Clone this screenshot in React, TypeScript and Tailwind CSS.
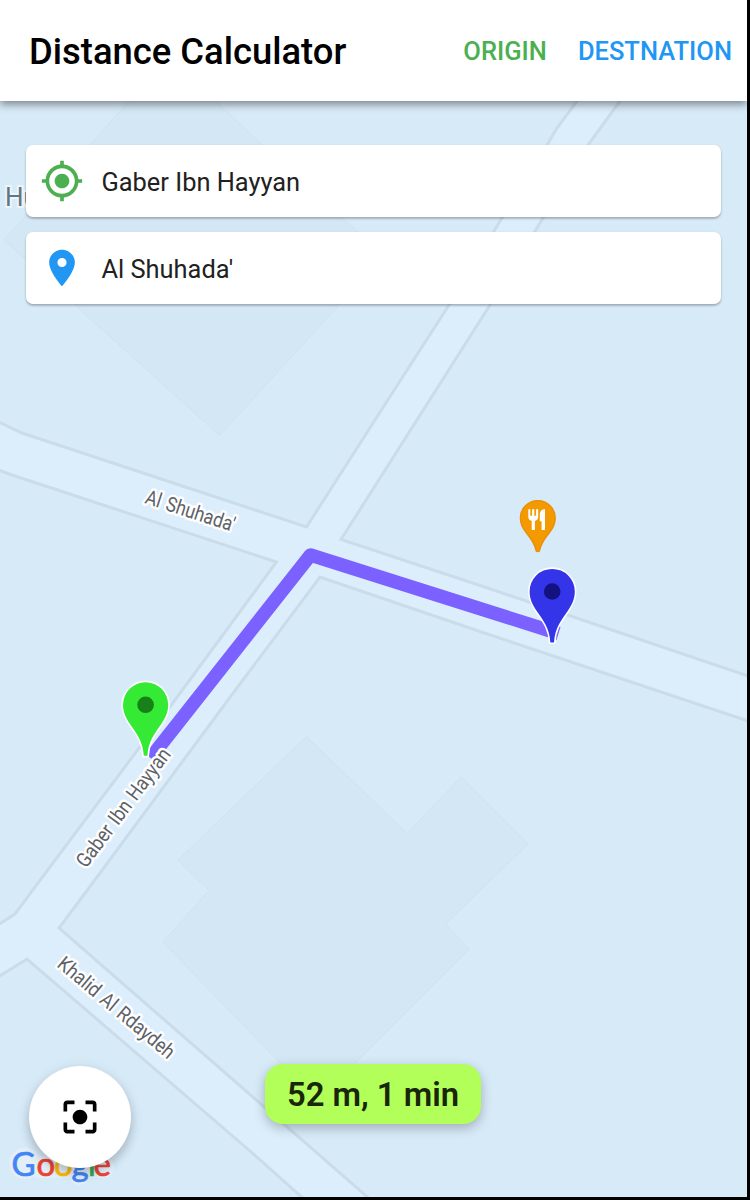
import React from "react";
import { MdCenterFocusStrong, MdLocationOn, MdMyLocation } from "react-icons/md";

type PinProps = { x: number; y: number; fill: string; dot: string };

function Pin({ x, y, fill, dot }: PinProps) {
  return (
    <g transform={`translate(${x} ${y})`}>
      <path
        d="M-22.6 0A22.6 22.6 0 0 1 22.6 0C22.6 8 19.5 13.5 15.5 19.5C9.5 28.5 2.6 36 1.8 51H-1.8C-2.6 36 -9.5 28.5 -15.5 19.5C-19.5 13.5 -22.6 8 -22.6 0Z"
        fill={fill}
        stroke="#fff"
        strokeWidth="3.2"
        paintOrder="stroke"
      />
      <circle r="8.3" fill={dot} />
    </g>
  );
}

function RestaurantPin() {
  return (
    <g transform="translate(537.8 518)">
      <path
        d="M-17.4 0A17.4 17.4 0 0 1 17.4 0C17.4 6 15 10.5 11.5 14.8C7 20.3 3 25 1.6 33Q0 34.3 -1.6 33C-3 25 -7 20.3 -11.5 14.8C-15 10.5 -17.4 6 -17.4 0Z"
        fill="#f39a00"
        stroke="#ec8f06"
        strokeWidth="1.4"
      />
      <path
        d="M-9.5 -8.5Q-8.5 -9.5 -7.5 -8.5V-2.2H-5.700V-8.5Q-4.600 -9.5 -3.500 -8.5V-2.2H-1.700V-8.5Q-0.600 -9.5 0.400 -8.5V-1.2Q0.400 2 -2.900 3V12H-6.100V3Q-9.5 2 -9.5 -1.2Z"
        fill="#fff"
      />
      <path d="M7.2 -9V12H3.8V3.2H2V-3.5Q2.2 -8.6 7.2 -9Z" fill="#fff" />
    </g>
  );
}

function MapCanvas() {
  return (
    <svg className="absolute inset-0" width="747" height="1197" viewBox="0 0 747 1197">
      <rect width="747" height="1197" fill="#d7eaf8" />
      <g fill="#d4e7f5" stroke="#cbdfee" strokeWidth="0.7">
        <path d="M129 101L90 145L4 240L25 259L91 319.500L219.500 435.500L339 305L385 255L342 218L262 145L216 101L170 60Z" />
        <path d="M306.500 736.500L407 833.500L461 777L528 844L445.500 924L469 949L354 1064L318 1100L281 1064L163 942L209 890.500L178 860Z" />
      </g>
      <path
        d="M-10 418L22 433L306.500 527L375 420L449 305L502 218L547 145L557 128L577 101L610 60L652 60L620 101L588 145L543 218L490 305L341 539.500L480 585.500L760 680V725L480 631.500L320 577L228 700L80 900L59 928L250 1094.500L380 1208H314L250 1151L27 959L-10 982V930L15 914L50 867L175 700L276.500 562L15 476L-10 467Z"
        fill="#dceefc"
        stroke="#cadcea"
        strokeWidth="3"
      />
      <path d="M150.500 758L310.500 555L558.500 633.500" fill="none" stroke="#7b61ff" strokeWidth="13.500" strokeLinejoin="round" />
      <g
        fontFamily="Roboto, sans-serif"
        fontSize="20.500"
        wordSpacing="1.5"
        fill="#5d6268"
        stroke="#fff"
        strokeWidth="5"
        strokeLinejoin="round"
        paintOrder="stroke"
      >
        <text transform="translate(144 503) rotate(18)" textLength="93" lengthAdjust="spacingAndGlyphs">Al Shuhada'</text>
        <text transform="translate(86 869) rotate(-53.200)" textLength="143" lengthAdjust="spacingAndGlyphs">Gaber Ibn Hayyan</text>
        <text transform="translate(56 966) rotate(40)" textLength="146" lengthAdjust="spacingAndGlyphs">Khalid Al Rdaydeh</text>
      </g>
      <text
        x="5"
        y="205.500"
        fontFamily="Roboto, sans-serif"
        fontSize="26"
        fill="#5f7785"
        stroke="#edf5fb"
        strokeWidth="4"
        paintOrder="stroke"
      >
        Hu
      </text>
      <RestaurantPin />
      <Pin x={552.2} y={591.5} fill="#3434e8" dot="#121280" />
      <Pin x={145.6} y={704.8} fill="#35ea35" dot="#178017" />
      <g fill="#e3eef8" stroke="#e3eef8" strokeLinecap="round">
        <circle cx="25" cy="1163.500" r="15.500" />
        <path d="M40 1167H103" strokeWidth="22" />
        <path d="M79 1170V1175" strokeWidth="20" />
      </g>
      <g fontFamily="Lato, sans-serif" fontSize="33" strokeWidth="0.7">
        <text y="1175.500">
          <tspan x="11.500" fill="#4285f4" stroke="#4285f4">G</tspan>
          <tspan x="36.500" fill="#ea4335" stroke="#ea4335">o</tspan>
          <tspan x="54" fill="#fbbc05" stroke="#fbbc05">o</tspan>
          <tspan x="71.500" fill="#4285f4" stroke="#4285f4">g</tspan>
          <tspan x="88" fill="#34a853" stroke="#34a853">l</tspan>
          <tspan x="93.500" fill="#ea4335" stroke="#ea4335">e</tspan>
        </text>
      </g>
    </svg>
  );
}

function PlaceField({ icon, label }: { icon: React.ReactNode; label: string }) {
  return (
    <div className="flex h-[72px] items-center gap-[18px] rounded-[7px] bg-white pl-[14px] shadow-[0_2px_2px_rgba(0,0,0,0.18),0_1px_3px_rgba(0,0,0,0.12)]">
      {icon}
      <span className="pt-[2px] text-[25.400px] leading-8 text-[#212121]">{label}</span>
    </div>
  );
}

export default function App() {
  return (
    <div className="h-[1200px] w-[750px] overflow-hidden bg-black font-['Roboto',sans-serif]">
      <div className="relative h-[1197px] w-[747px] overflow-hidden">
        <MapCanvas />
        <div className="relative flex h-full flex-col">
          <header className="flex h-[101px] shrink-0 items-center justify-between bg-white pt-[2px] pr-[15px] pl-[29px] shadow-[0_4px_8px_rgba(0,0,0,0.3),0_1px_8px_rgba(0,0,0,0.2)]">
            <h1 className="pt-[2px] text-[36.400px] font-medium whitespace-nowrap text-black">Distance Calculator</h1>
            <nav className="flex gap-[31px] text-[25.500px] font-medium">
              <button className="text-[#4caf50]">ORIGIN</button>
              <button className="text-[#2196f3]">DESTNATION</button>
            </nav>
          </header>
          <div className="mt-[44px] mr-[26px] ml-[25.500px] flex flex-col gap-[15px]">
            <PlaceField icon={<MdMyLocation size={44} className="text-[#4caf50]" />} label="Gaber Ibn Hayyan" />
            <PlaceField icon={<MdLocationOn size={44} className="text-[#2196f3]" />} label="Al Shuhada'" />
          </div>
          <footer className="mt-auto flex items-start gap-[134px] pb-[29px] pl-[29px]">
            <button className="flex size-[102px] items-center justify-center rounded-full bg-white text-black shadow-[0_6px_10px_rgba(0,0,0,0.14),0_3px_14px_rgba(0,0,0,0.12)]">
              <MdCenterFocusStrong size={44} />
            </button>
            <div className="-mt-[2px] flex h-[60px] w-[216px] items-center justify-center rounded-[18px] bg-[#b2ff59] pt-[4px] text-[32.800px] font-semibold whitespace-nowrap text-[#1a2609] shadow-[0_4px_12px_rgba(0,0,0,0.26)]">
              52 m, 1 min
            </div>
          </footer>
        </div>
      </div>
    </div>
  );
}
